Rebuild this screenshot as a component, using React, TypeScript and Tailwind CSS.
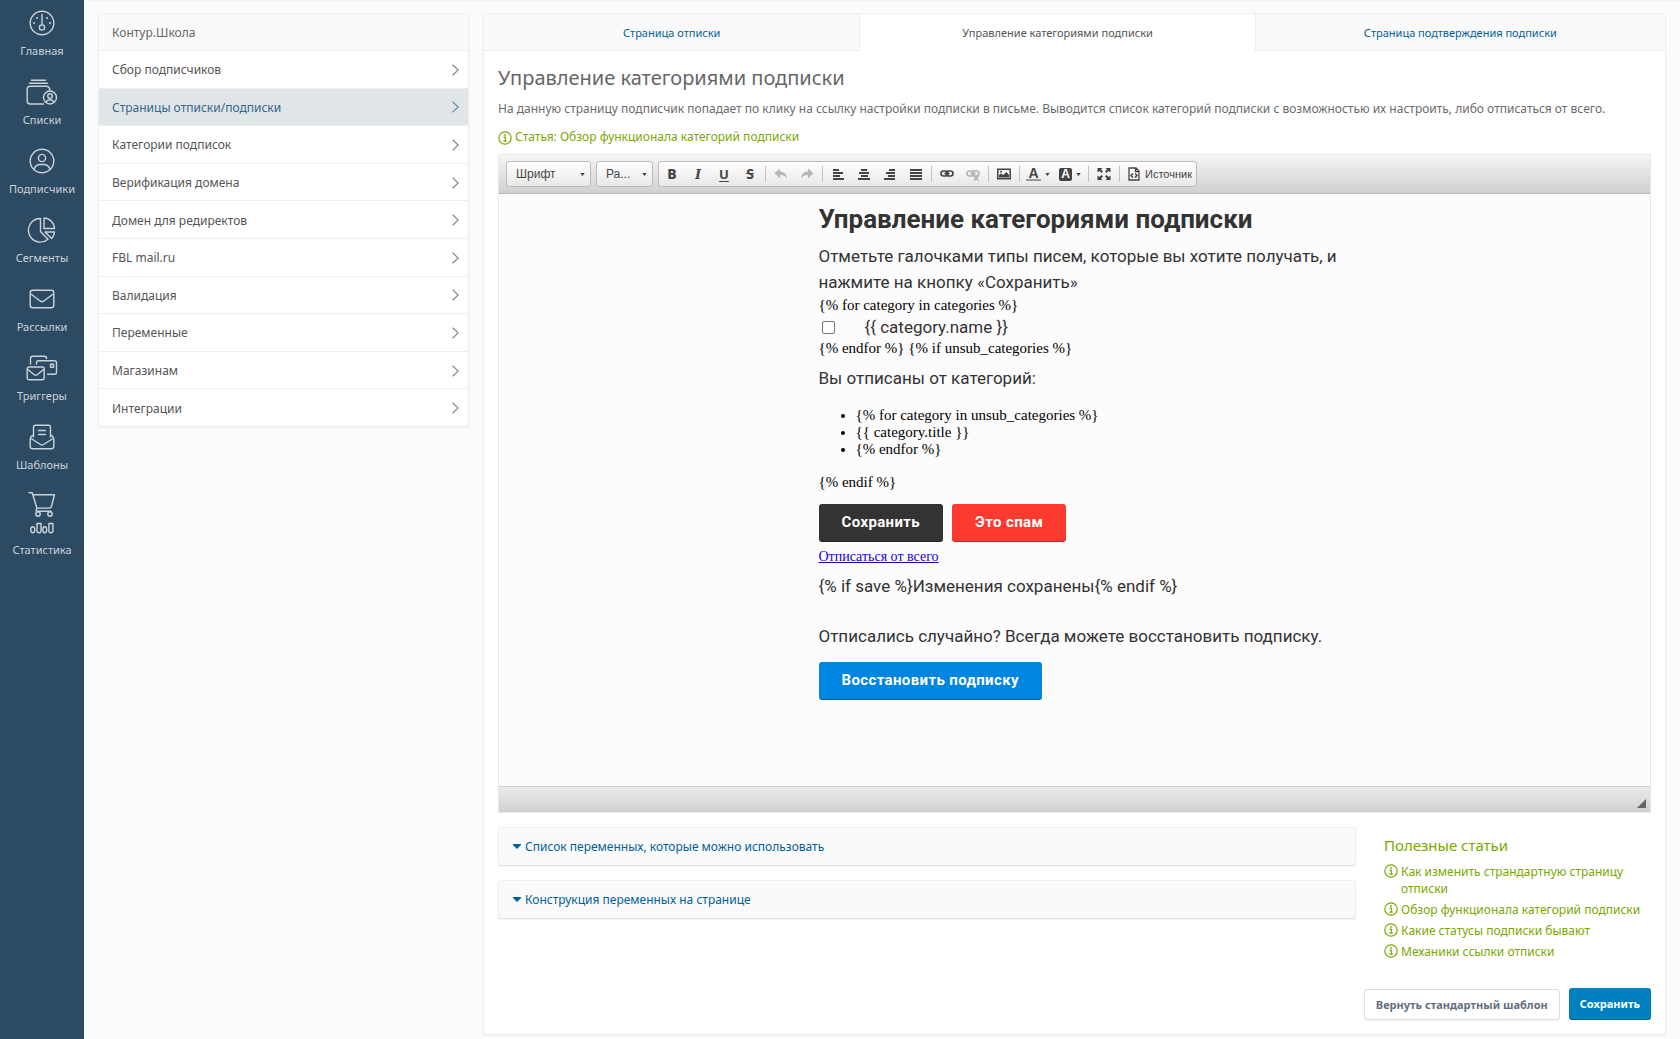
import { useState } from "react";
import type { ReactNode } from "react";
import { clsx } from "clsx";

function Glyph({ children, className = "h-7 w-8" }: { children: ReactNode; className?: string }) {
  return (
    <svg
      viewBox="0 0 32 28"
      className={className}
      fill="none"
      stroke="currentColor"
      strokeWidth="1.4"
      strokeLinecap="round"
      strokeLinejoin="round"
    >
      {children}
    </svg>
  );
}

const nav = [
  {
    label: "Главная",
    icon: (
      <Glyph>
        <circle cx="16" cy="14" r="11.8" />
        <circle cx="16" cy="18.5" r="2.6" />
        <path d="M16 15.5V5.5" />
        <path d="M11 9h.1M21 9h.1M8 14h.1M24 14h.1" strokeWidth="1.9" />
      </Glyph>
    ),
  },
  {
    label: "Списки",
    icon: (
      <Glyph>
        <path d="M5.5 2.2h14M3.5 5.2h18" />
        <path d="M17.5 26H4.2q-3 0-3-3V11.2q0-3 3-3h16q3 0 3.5 3v1" />
        <circle cx="24" cy="19.5" r="6.5" />
        <circle cx="24" cy="18" r="2.3" />
        <path d="M19.8 24q4.2-4.5 8.4 0" />
      </Glyph>
    ),
  },
  {
    label: "Подписчики",
    icon: (
      <Glyph>
        <circle cx="16" cy="14" r="11.8" />
        <circle cx="16" cy="11" r="3.6" />
        <path d="M8 22.5q1.5-5 6-5h4q4.5 0 6 5" />
      </Glyph>
    ),
  },
  {
    label: "Сегменты",
    icon: (
      <Glyph>
        <path d="M14.5 2.5A11.8 11.8 0 1 0 22 23.2L14.5 15.5Z" />
        <path d="M18 2v10.5h10.5A10.8 10.8 0 0 0 18 2Z" />
        <path d="M19 16h9.5q-.5 4-2.8 6.5Z" />
      </Glyph>
    ),
  },
  {
    label: "Рассылки",
    icon: (
      <Glyph>
        <rect x="4.2" y="5.2" width="23.6" height="17.6" rx="2.5" />
        <path d="m5.5 9.5 9 6.7q1.5 1 3 0l9-6.7" />
      </Glyph>
    ),
  },
  {
    label: "Триггеры",
    icon: (
      <Glyph>
        <path d="M4.5 10V4.5q0-2.3 2.3-2.3h11.5q2.3 0 2.3 2.3" />
        <path d="M10.5 10V8.8q0-2 2-2h16q2 0 2 2v9.5q0 2-2 2h-7" />
        <rect x="24.5" y="10.2" width="3" height="3" />
        <rect x="1.2" y="13" width="17" height="12.8" rx="2" />
        <path d="m1.8 15.5 6.5 5.2q1.4 1 2.8 0l6.5-5.2" />
      </Glyph>
    ),
  },
  {
    label: "Шаблоны",
    icon: (
      <Glyph>
        <path d="M7.5 14V4.2q0-2 2-2h13q2 0 2 2V14" />
        <path d="M12.5 7.5h7M12.5 11.5h7" />
        <path d="M6.5 12.5q-2.3 1-2.3 3.5v7.5q0 2.3 2.3 2.3h19q2.3 0 2.3-2.3V16q0-2.5-2.3-3.5" />
        <path d="m5 15.5 9.5 6q1.5 1 3 0l9.5-6" />
      </Glyph>
    ),
  },
  {
    label: "Статистика",
    icon: (
      <svg
        viewBox="0 0 32 44"
        className="h-11 w-8"
        fill="none"
        stroke="currentColor"
        strokeWidth="1.4"
        strokeLinecap="round"
        strokeLinejoin="round"
      >
        <path d="M3 .8h3.2L11 16.5q-2 2.7.5 2.7h13.5M6.8 2.8h21.7l-3 11.5q-.5 1.8-2.5 1.8H11" />
        <circle cx="12" cy="22" r="2.2" />
        <circle cx="24" cy="22" r="2.2" />
        <ellipse cx="6.8" cy="37.7" rx="2" ry="3" />
        <ellipse cx="18.7" cy="37.7" rx="2" ry="3" />
        <path d="M11 31.5v7.2a2 2 0 0 0 4 0v-7.2ZM22.9 31.5v7.2a2 2 0 0 0 4 0v-7.2Z" />
      </svg>
    ),
  },
];

const sections = [
  "Сбор подписчиков",
  "Страницы отписки/подписки",
  "Категории подписок",
  "Верификация домена",
  "Домен для редиректов",
  "FBL mail.ru",
  "Валидация",
  "Переменные",
  "Магазинам",
  "Интеграции",
];

const tabs = ["Страница отписки", "Управление категориями подписки", "Страница подтверждения подписки"];

const articles = [
  "Как изменить страндартную страницу отписки",
  "Обзор функционала категорий подписки",
  "Какие статусы подписки бывают",
  "Механики ссылки отписки",
];

function InfoIcon() {
  return (
    <svg viewBox="0 0 14 14" className="mt-px h-3.5 w-3.5 shrink-0" fill="none" stroke="currentColor">
      <circle cx="7" cy="7" r="6.2" strokeWidth="1.2" />
      <path d="M5.6 6.2h1.7v3.8M5.3 10.2h3.6" strokeWidth="1.2" />
      <circle cx="7" cy="3.9" r=".9" fill="currentColor" stroke="none" />
    </svg>
  );
}

function Tool({ label, wide, dim, children }: { label: string; wide?: boolean; dim?: boolean; children: ReactNode }) {
  return (
    <button
      type="button"
      aria-label={label}
      disabled={dim}
      className={clsx(
        "flex h-6 items-center justify-center gap-1 text-[#444]",
        wide ? "w-8" : "w-[26px]",
        dim && "opacity-35"
      )}
    >
      {children}
    </button>
  );
}

function Sep() {
  return <span className="mx-0.5 h-4 w-px shrink-0 bg-[#c4c4c4]" />;
}

function Caret() {
  return (
    <svg viewBox="0 0 6 4" className="h-[3px] w-[5px] shrink-0" fill="#444">
      <path d="M0 0h6L3 4z" />
    </svg>
  );
}

function ToolSvg({ children }: { children: ReactNode }) {
  return (
    <svg viewBox="0 0 16 16" className="h-4 w-4 shrink-0" fill="currentColor">
      {children}
    </svg>
  );
}

function Combo({ label, text, className }: { label: string; text: string; className: string }) {
  return (
    <div className={clsx("relative h-[26px]", className)}>
      <select
        aria-label={label}
        className="h-full w-full appearance-none rounded-[3px] border border-[#bcbcbc] bg-linear-to-b from-white to-[#e8e8e8] pl-[9px] font-['Liberation_Sans',sans-serif] text-xs text-[#474747]"
      >
        <option>{text}</option>
      </select>
      <span className="pointer-events-none absolute inset-y-0 right-1.5 flex items-center">
        <Caret />
      </span>
    </div>
  );
}

// link / unlink share the chain drawing
function Chain() {
  return (
    <g fill="none" stroke="currentColor" strokeWidth="1.6">
      <rect x="2" y="5" width="7" height="5" rx="2.5" />
      <rect x="7" y="5" width="7" height="5" rx="2.5" />
      <path d="M5.5 7.5h5" />
    </g>
  );
}

function Toolbar() {
  return (
    <div className="flex h-[39px] items-center border-b border-[#b6b6b6] bg-linear-to-b from-[#f5f5f5] to-[#cfd1cf] pl-[7px]">
      <Combo label="Шрифт" text="Шрифт" className="mr-[5px] w-[85px]" />
      <Combo label="Размер" text="Ра..." className="mr-[5px] w-[57px]" />
      <div className="flex h-[26px] items-center rounded-[3px] border border-[#bcbcbc] bg-linear-to-b from-white to-[#e8e8e8]">
        <Tool label="Полужирный"><b className="text-sm font-extrabold">B</b></Tool>
        <Tool label="Курсив"><b className="font-['DejaVu_Serif',serif] text-[13px] italic">I</b></Tool>
        <Tool label="Подчеркнутый"><b className="text-[13px] underline underline-offset-2">U</b></Tool>
        <Tool label="Зачеркнутый"><b className="text-sm line-through">S</b></Tool>
        <Sep />
        <Tool label="Отменить" dim>
          <ToolSvg><path d="M7 2.5v3c4 0 6.5 2.5 7 7-1.5-2.5-3.5-3.5-7-3.5v3.2L1.5 7.3z" /></ToolSvg>
        </Tool>
        <Tool label="Повторить" dim>
          <ToolSvg><path d="M9 2.5v3c-4 0-6.5 2.5-7 7 1.5-2.5 3.5-3.5 7-3.5v3.2l5.5-4.9z" /></ToolSvg>
        </Tool>
        <Sep />
        <Tool label="По левому краю">
          <ToolSvg><path d="M3 3h6v2H3zM3 6h10v2H3zM3 9h7v2H3zM3 12h11v2H3z" /></ToolSvg>
        </Tool>
        <Tool label="По центру">
          <ToolSvg><path d="M5 3h6v2H5zM3 6h10v2H3zM5 9h7v2H5zM2 12h12v2H2z" /></ToolSvg>
        </Tool>
        <Tool label="По правому краю">
          <ToolSvg><path d="M7 3h6v2H7zM4 6h9v2H4zM6 9h7v2H6zM2 12h11v2H2z" /></ToolSvg>
        </Tool>
        <Tool label="По ширине">
          <ToolSvg><path d="M2 3h12v2H2zM2 6h12v2H2zM2 9h12v2H2zM2 12h12v2H2z" /></ToolSvg>
        </Tool>
        <Sep />
        <Tool label="Ссылка"><ToolSvg><Chain /></ToolSvg></Tool>
        <Tool label="Убрать ссылку" dim>
          <ToolSvg>
            <Chain />
            <path d="m9 9.5 4.5 5M13.5 9.5l-4.5 5" stroke="currentColor" strokeWidth="1.6" />
          </ToolSvg>
        </Tool>
        <Sep />
        <Tool label="Изображение">
          <ToolSvg>
            <path fillRule="evenodd" d="M1 2.5h14v11H1zM2.5 4v8h11V4z" />
            <path d="M3 11.5V9l2-1.5 2 1.5 3.5-3L13 9v2.5z" />
            <circle cx="5" cy="5.7" r="1" />
          </ToolSvg>
        </Tool>
        <Sep />
        <Tool label="Цвет текста" wide>
          <b className="border-b-2 border-[#999] px-0.5 font-['Liberation_Sans',sans-serif] text-sm leading-3">A</b>
          <Caret />
        </Tool>
        <Tool label="Цвет фона" wide>
          <b className="h-[13px] w-[13px] rounded-[2px] bg-[#444] text-center font-['Liberation_Sans',sans-serif] text-xs leading-[13px] text-white">A</b>
          <Caret />
        </Tool>
        <Sep />
        <Tool label="Развернуть">
          <ToolSvg>
            <path d="M1.5 2h5L5 3.6l2 2L5.5 7l-2-2-2 1.5zM14.5 2h-5L11 3.6l-2 2L10.5 7l2-2 2 1.5zM1.5 14h5L5 12.4l2-2L5.5 9l-2 2-2-1.5zM14.5 14h-5l1.5-1.6-2-2L10.5 9l2 2 2-1.5z" />
          </ToolSvg>
        </Tool>
        <Sep />
        <button
          type="button"
          className="flex h-6 items-center gap-[3px] px-1 font-['Liberation_Sans',sans-serif] text-[11px] text-[#444]"
        >
          <svg viewBox="0 0 16 16" className="h-4 w-4" fill="none" stroke="currentColor" strokeWidth="1.3">
            <path d="M3 2h7l3 3v9H3zM9.5 2v3.5H13" />
            <path d="M7 7.5 5 9.5l2 2M9 7.5l2 2-2 2" strokeWidth="1.5" />
          </svg>
          Источник
        </button>
      </div>
    </div>
  );
}

function EditorBody() {
  const pill =
    "h-[38px] rounded-[3px] border-b border-black/25 px-[23px] font-['Roboto',sans-serif] text-[15px] font-bold tracking-wide text-white";
  const para = "-mr-3 font-['Roboto',sans-serif] text-[17px] leading-[26px] text-[#333]";

  return (
    <div className="mx-auto h-[592px] w-[512px] pt-2 font-['Liberation_Serif',serif] text-[15px] leading-[17px] text-black">
      <h1 className="mb-[7px] font-['Roboto',sans-serif] text-[26px] leading-[34px] font-bold text-[#333]">
        Управление категориями подписки
      </h1>
      <p className={para}>Отметьте галочками типы писем, которые вы хотите получать, и нажмите на кнопку «Сохранить»</p>
      <p className="mt-0.5">{"{% for category in categories %}"}</p>
      <label className="flex h-[26px] items-center gap-[30px] pl-[3px] font-['Roboto',sans-serif] text-[17px] text-[#333]">
        <input
          type="checkbox"
          className="h-[13px] w-[13px] appearance-none rounded-[2px] border border-[#767676] bg-white"
        />
        {"{{ category.name }}"}
      </label>
      <p>{"{% endfor %} {% if unsub_categories %}"}</p>
      <p className={clsx(para, "mt-2")}>Вы отписаны от категорий:</p>
      <ul className="my-4 list-disc pl-[37px]">
        <li>{"{% for category in unsub_categories %}"}</li>
        <li>{"{{ category.title }}"}</li>
        <li>{"{% endfor %}"}</li>
      </ul>
      <p>{"{% endif %}"}</p>
      <div className="mt-[13px] flex gap-[9px]">
        <button type="button" className={clsx(pill, "bg-[#333]")}>Сохранить</button>
        <button type="button" className={clsx(pill, "bg-[#fc3a30]")}>Это спам</button>
      </div>
      <a href="#unsubscribe" className="mt-1.5 block w-fit text-sm leading-[17px] text-[#1a00d8] underline">
        Отписаться от всего
      </a>
      <p className={clsx(para, "mt-2")}>{"{% if save %}Изменения сохранены{% endif %}"}</p>
      <p className={clsx(para, "mt-6")}>Отписались случайно? Всегда можете восстановить подписку.</p>
      <button type="button" className={clsx(pill, "mt-[13px] bg-[#0085e0]")}>Восстановить подписку</button>
    </div>
  );
}

function Fold({ title }: { title: string }) {
  return (
    <button
      type="button"
      className="flex h-[39px] w-full items-center gap-1 rounded-[3px] border border-[#f0f0f0] border-b-[#e0e0e4] bg-[#fafafa] px-3.5 text-[#00619a] shadow-xs"
    >
      <svg viewBox="0 0 8 5" className="h-[5px] w-2" fill="currentColor">
        <path d="M0 0h8v1L4 5 0 1z" />
      </svg>
      {title}
    </button>
  );
}

export default function App() {
  const [tab, setTab] = useState(1);

  return (
    <div className="flex min-h-screen bg-[#fbfbfb] font-['Noto_Sans',sans-serif] text-xs leading-[17px] text-[#555]">
      <nav className="w-[84px] shrink-0 bg-[#2d4a63] pt-[9px] text-[#cbd3da]">
        {nav.map((item) => (
          <a key={item.label} href="#" className="mb-[19px] flex flex-col items-center gap-1.5 text-[11px] leading-4">
            {item.icon}
            {item.label}
          </a>
        ))}
      </nav>

      <div className="flex min-w-0 flex-1 items-start gap-3.5 border-t border-[#f3f3f3] px-3.5 pt-3 pb-1">
        {/* Settings sections */}
        <aside className="w-[371px] shrink-0 rounded-[3px] border border-[#efefef] bg-white shadow-xs">
          <h2 className="flex h-9 items-center bg-[#fafafa] px-[13px] text-[#666]">Контур.Школа</h2>
          <ul className="grid h-[376px] grid-rows-10">
            {sections.map((s, i) => (
              <li key={s} className={clsx("border-t border-[#eee]", i === 1 && "bg-[#e0e5e8] text-[#33658f]")}>
                <a href="#" className="flex h-full items-center justify-between pt-px pr-[9px] pl-[13px]">
                  {s}
                  <svg viewBox="0 0 7 12" className="h-3 w-[7px] opacity-70" fill="none" stroke="currentColor" strokeWidth="1.2">
                    <path d="m.6.8 5.6 5.2-5.6 5.2" />
                  </svg>
                </a>
              </li>
            ))}
          </ul>
        </aside>

        <main className="min-w-0 flex-1 rounded-[3px] border border-[#efefef] bg-white shadow-xs">
          <div role="tablist" className="grid grid-cols-[377fr_395fr_411fr]">
            {tabs.map((t, i) => (
              <button
                key={t}
                type="button"
                role="tab"
                aria-selected={i === tab}
                onClick={() => setTab(i)}
                className={clsx(
                  "h-[37px] border-[#ececec] text-[11px]",
                  i === tab ? "bg-white text-[#555]" : "border-b bg-[#fafafa] text-[#00619a]",
                  i < tab && "border-r",
                  i > tab && "border-l"
                )}
              >
                {t}
              </button>
            ))}
          </div>

          <div className="px-3.5 pt-[11px] pb-3.5">
            <h1 className="text-xl leading-8 text-[#666]">Управление категориями подписки</h1>
            <p className="mt-[3px] leading-6 text-[#6b6b6b]">
              На данную страницу подписчик попадает по клику на ссылку настройки подписки в письме. Выводится список
              категорий подписки с возможностью их настроить, либо отписаться от всего.
            </p>
            <a href="#article" className="mt-1.5 flex w-fit items-center gap-[3px] leading-5 text-[#7aa800]">
              <InfoIcon />
              Статья: Обзор функционала категорий подписки
            </a>

            {/* Template editor */}
            <div className="mt-[7px] border border-[#e8e8e8] bg-[#fcfcfc]">
              <Toolbar />
              <EditorBody />
              <div className="flex h-[26px] items-end justify-end border-t border-[#d0d0d0] bg-linear-to-b from-[#ebebeb] to-[#cfd1cf] p-1">
                <svg viewBox="0 0 9 9" className="h-[9px] w-[9px]" fill="#666">
                  <path d="M9 0v9H0z" />
                </svg>
              </div>
            </div>

            <div className="mt-3.5 flex gap-7">
              <div className="flex-1 space-y-3.5">
                <Fold title="Список переменных, которые можно использовать" />
                <Fold title="Конструкция переменных на странице" />
              </div>
              <div className="w-[267px] pt-[7px] text-[#7aa800]">
                <h3 className="mb-[7px] text-[15px] leading-[22px]">Полезные статьи</h3>
                <ul className="space-y-1">
                  {articles.map((a) => (
                    <li key={a}>
                      <a href="#article" className="flex gap-[3px]">
                        <InfoIcon />
                        {a}
                      </a>
                    </li>
                  ))}
                </ul>
              </div>
            </div>

            <div className="mt-7 flex items-center justify-end gap-[9px] text-[11px] font-bold">
              <button type="button" className="h-[31px] rounded-[3px] border border-[#ddd] bg-white px-[11px] text-[#5f6f80] shadow-xs">
                Вернуть стандартный шаблон
              </button>
              <button type="button" className="h-8 rounded-[3px] border-b border-[#006ba3] bg-[#0080bf] px-[11px] text-white">
                Сохранить
              </button>
            </div>
          </div>
        </main>
      </div>
    </div>
  );
}
